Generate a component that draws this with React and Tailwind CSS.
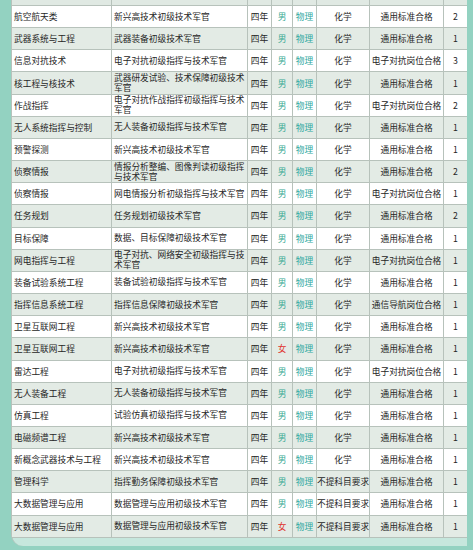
const rows = [
  ["航空航天类", "新兴高技术初级技术军官", "男", "化学", "通用标准合格", "2"],
  ["武器系统与工程", "武器装备初级技术军官", "男", "化学", "通用标准合格", "1"],
  ["信息对抗技术", "电子对抗初级指挥与技术军官", "男", "化学", "电子对抗岗位合格", "3"],
  ["核工程与核技术", "武器研发试验、技术保障初级技术军官", "男", "化学", "通用标准合格", "1"],
  ["作战指挥", "电子对抗作战指挥初级指挥与技术军官", "男", "化学", "电子对抗岗位合格", "2"],
  ["无人系统指挥与控制", "无人装备初级指挥与技术军官", "男", "化学", "通用标准合格", "1"],
  ["预警探测", "新兴高技术初级技术军官", "男", "化学", "通用标准合格", "1"],
  ["侦察情报", "情报分析整编、图像判读初级指挥\n与技术军官", "男", "化学", "通用标准合格", "2"],
  ["侦察情报", "网电情报分析初级指挥与技术军官", "男", "化学", "电子对抗岗位合格", "1"],
  ["任务规划", "任务规划初级技术军官", "男", "化学", "通用标准合格", "2"],
  ["目标保障", "数据、目标保障初级技术军官", "男", "化学", "通用标准合格", "1"],
  ["网电指挥与工程", "电子对抗、网络安全初级指挥与技术军官", "男", "化学", "电子对抗岗位合格", "1"],
  ["装备试验系统工程", "装备试验初级指挥与技术军官", "男", "化学", "通用标准合格", "1"],
  ["指挥信息系统工程", "指挥信息保障初级技术军官", "男", "化学", "通信导航岗位合格", "1"],
  ["卫星互联网工程", "新兴高技术初级技术军官", "男", "化学", "通用标准合格", "1"],
  ["卫星互联网工程", "新兴高技术初级技术军官", "女", "化学", "通用标准合格", "1"],
  ["雷达工程", "电子对抗初级指挥与技术军官", "男", "化学", "电子对抗岗位合格", "1"],
  ["无人装备工程", "无人装备初级指挥与技术军官", "男", "化学", "通用标准合格", "1"],
  ["仿真工程", "试验仿真初级指挥与技术军官", "男", "化学", "通用标准合格", "1"],
  ["电磁频谱工程", "新兴高技术初级技术军官", "男", "化学", "通用标准合格", "1"],
  ["新概念武器技术与工程", "新兴高技术初级技术军官", "男", "化学", "通用标准合格", "1"],
  ["管理科学", "指挥勤务保障初级技术军官", "男", "不提科目要求", "通用标准合格", "1"],
  ["大数据管理与应用", "数据管理与应用初级技术军官", "男", "不提科目要求", "通用标准合格", "1"],
  ["大数据管理与应用", "数据管理与应用初级技术军官", "女", "不提科目要求", "通用标准合格", "1"],
];

const cols = "grid grid-cols-[100px_136px_24px_21px_24px_53px_74px_23px]";
const cell = "border-r border-[#b7c2bb] flex items-center";

function Row({ r, i }) {
  const bg = i % 2 === 0 ? "bg-white" : "bg-[#e3ebe5]";
  return (
    <div className={`${cols} ${bg} h-[22.17px] border-b border-[#b7c2bb]`}>
      <div className={`${cell} pl-[2px]`}>{r[0]}</div>
      <div className={`${cell} pl-[2px] pr-[2px] leading-[10px] whitespace-pre-line`}>{r[1]}</div>
      <div className={`${cell} justify-center`}>四年</div>
      <div className={`${cell} justify-center ${r[2] === "女" ? "text-[#e0322c]" : "text-[#3aaa94]"}`}>{r[2]}</div>
      <div className={`${cell} justify-center text-[#2fa8a0]`}>物理</div>
      <div className={`${cell} justify-center whitespace-nowrap`}>{r[3]}</div>
      <div className={`${cell} justify-center whitespace-nowrap`}>{r[4]}</div>
      <div className="flex items-center justify-center">{r[5]}</div>
    </div>
  );
}

export default function App() {
  return (
    <div
      className="w-[473px] h-[550px] overflow-hidden bg-[#93d2c1] text-[8.7px] text-[#262626]"
      style={{ fontFamily: '"Noto Sans CJK SC", "Noto Sans", sans-serif' }}
    >
      <div className="ml-[11px] w-[456px] bg-[#c6e7dd] rounded-bl-xl pb-[8px] border-l border-[#b7c2bb]">
        <div className={`${cols} bg-[#e0e9e3] h-[6px] border-b border-[#b7c2bb]`}>
          <div className={cell}></div>
          <div className={cell}></div>
          <div className={cell}></div>
          <div className={cell}></div>
          <div className={cell}></div>
          <div className={cell}></div>
          <div className={cell}></div>
          <div></div>
        </div>
        {rows.map((r, i) => (
          <Row key={i} r={r} i={i} />
        ))}
      </div>
    </div>
  );
}
